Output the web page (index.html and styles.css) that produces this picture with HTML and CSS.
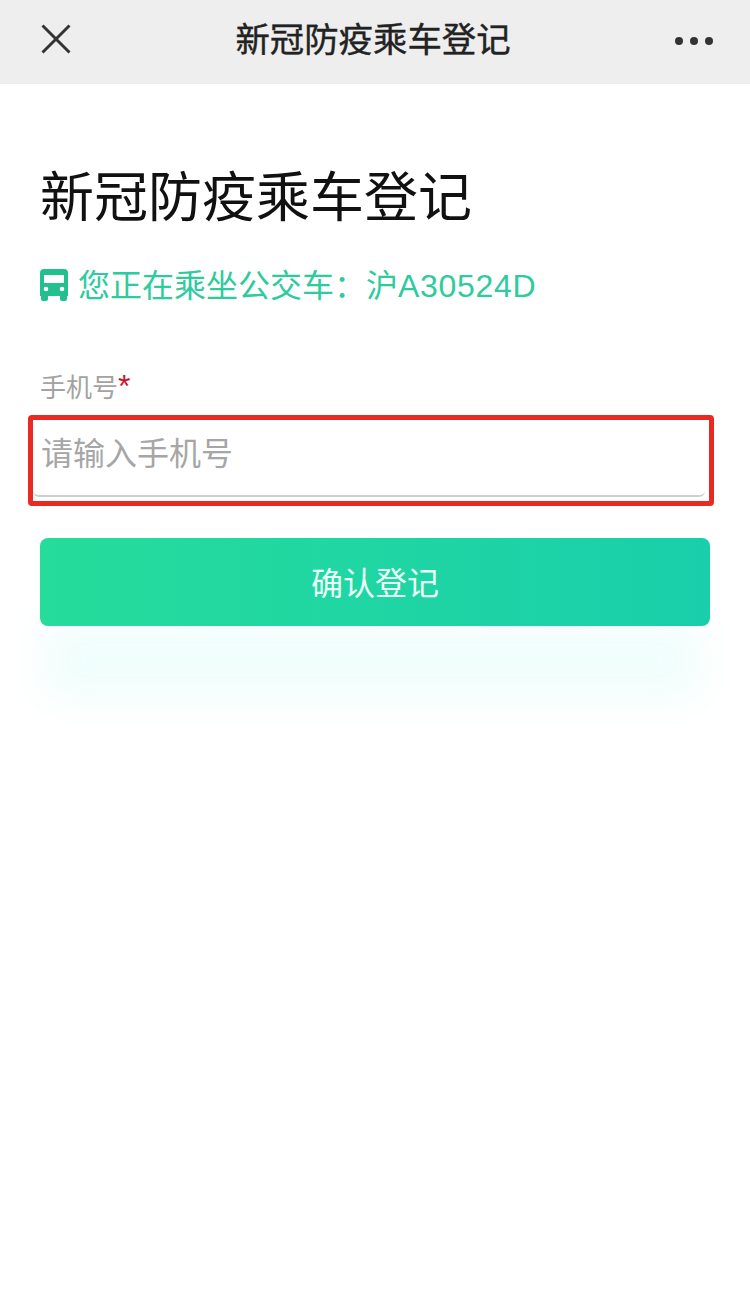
FILE: index.html
```html
<!DOCTYPE html>
<html lang="zh-CN">
<head>
    <meta charset="UTF-8">
    <meta name="viewport" content="width=device-width, initial-scale=1.0">
    <title>新冠防疫乘车登记</title>
    <link rel="stylesheet" href="styles.css">
</head>
<body>
    <header class="topbar">
        <svg class="close-icon" viewBox="0 0 30 30" width="30" height="30">
            <path d="M1.5 1.5 L28.5 28.5 M28.5 1.5 L1.5 28.5" stroke="#333" stroke-width="3" fill="none"/>
        </svg>
        <div class="topbar-title">新冠防疫乘车登记</div>
        <div class="more">
            <span></span><span></span><span></span>
        </div>
    </header>

    <main class="container">
        <h1>新冠防疫乘车登记</h1>

        <div class="bus-line">
            <svg class="bus-icon" viewBox="0 0 28 32" width="28" height="32">
                <path fill="#23c08f" fill-rule="evenodd" d="M4 0 H24 A4 4 0 0 1 28 4 V27 H27 V30 A2 2 0 0 1 25 32 H22 A2 2 0 0 1 20 30 V27 H8 V30 A2 2 0 0 1 6 32 H3 A2 2 0 0 1 1 30 V27 H0 V4 A4 4 0 0 1 4 0 Z M4 6 V14 H24 V6 Z M6 17.7 A2.3 2.3 0 1 0 6 22.3 A2.3 2.3 0 1 0 6 17.7 Z M22 17.7 A2.3 2.3 0 1 0 22 22.3 A2.3 2.3 0 1 0 22 17.7 Z"/>
            </svg>
            <span>您正在乘坐公交车：沪<span class="plate">A30524D</span></span>
        </div>

        <form>
            <label class="field-label" for="phone">手机号<span class="required">*</span></label>
            <div class="highlight">
                <input type="text" id="phone" name="phone" placeholder="请输入手机号">
            </div>
            <button type="button">确认登记</button>
        </form>
    </main>
</body>
</html>
```

FILE: styles.css
```css
* {
    box-sizing: border-box;
}

body {
    margin: 0;
    min-height: 1289px;
    background: #fff;
    font-family: "Liberation Sans", "Noto Sans CJK SC", sans-serif;
}

.topbar {
    display: flex;
    align-items: center;
    justify-content: space-between;
    height: 84px;
    padding: 0 37px 6px 41px;
    background: #eeeeee;
}

.close-icon {
    display: block;
}

.topbar-title {
    margin-top: -4px;
    font-size: 34.4px;
    color: #222;
    -webkit-text-stroke: 0.4px #222;
}

.more {
    display: flex;
    gap: 7px;
    margin-top: 4px;
}

.more span {
    width: 8px;
    height: 8px;
    border-radius: 50%;
    background: #333;
}

.container {
    padding: 0 40px;
}

h1 {
    margin: 0;
    padding-top: 77px;
    font-size: 54px;
    line-height: 74px;
    font-weight: normal;
    color: #111;
}

.bus-line {
    display: flex;
    align-items: center;
    gap: 10px;
    margin-top: 26px;
    height: 44px;
    font-size: 32px;
    color: #2ecb9e;
}

.plate {
    letter-spacing: 0.7px;
}

.bus-icon {
    flex: none;
    margin-top: 3px;
}

.field-label {
    display: block;
    margin-top: 65px;
    height: 36px;
    font-size: 26px;
    line-height: 36px;
    color: #a3a3a3;
}

.required {
    font-size: 32px;
    line-height: 0;
    color: #c9142c;
}

.highlight {
    margin: 9px -4px 0 -12px;
    height: 91px;
    padding-right: 4px;
    border: 5px solid #ea2a22;
    border-radius: 4px;
}

input {
    display: block;
    width: 100%;
    height: 77px;
    padding: 0 0 6px 8px;
    border: none;
    border-bottom: 2px solid #cfcfcf;
    border-radius: 0 0 6px 6px;
    outline: none;
    font-family: inherit;
    font-size: 32px;
    color: #333;
}

input::placeholder {
    color: #a6a6a6;
    opacity: 1;
}

button {
    display: block;
    width: 100%;
    height: 88px;
    margin-top: 32px;
    padding-bottom: 3px;
    border: none;
    border-radius: 8px;
    background: linear-gradient(90deg, #26dc9b, #19cfab);
    box-shadow: -3px 78px 40px -6px rgba(40, 240, 210, 0.07);
    font-family: inherit;
    font-size: 32px;
    color: #eafff8;
}
```
